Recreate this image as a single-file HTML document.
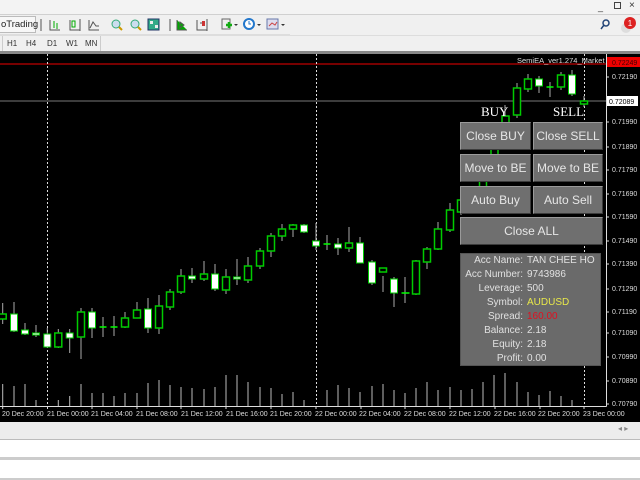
<!DOCTYPE html>
<html><head><meta charset="utf-8"><style>
*{margin:0;padding:0;box-sizing:border-box}
body{width:640px;height:480px;overflow:hidden;background:#f0f0f0;font-family:"Liberation Sans",sans-serif;position:relative}
.abs{position:absolute}
.btn{position:absolute;background:#6f6f6f;border-top:1px solid #9a9a9a;border-left:1px solid #9a9a9a;border-right:1px solid #3c3c3c;border-bottom:1px solid #3c3c3c;color:#e6e6e6;font-size:12px;text-align:center;line-height:26px;white-space:nowrap;overflow:hidden}
.info{position:absolute;left:460px;top:253px;width:141px;height:113px;background:#6a6a6a;border:1px solid #555}
.row{position:absolute;left:0;width:141px;font-size:10px;color:#e0e0e0;height:14px;line-height:14px}
.row .l{position:absolute;right:79px;text-align:right;white-space:nowrap}
.row .v{position:absolute;left:66px;white-space:nowrap}
.tf{position:absolute;top:39px;font-size:8px;color:#333}
</style></head><body>
<div class="abs" style="left:0;top:0;width:640px;height:15px;background:#f3f3f3"></div>
<div class="abs" style="left:598px;top:2px;font-size:9px;color:#333">_</div>
<div class="abs" style="left:614px;top:2px;width:7px;height:7px;border:1px solid #444"></div>
<div class="abs" style="left:629px;top:0px;font-size:10px;color:#333">×</div>
<div class="abs" style="left:0;top:14px;width:640px;height:1px;background:#d0d0d0"></div>
<div class="abs" style="left:0;top:15px;width:290px;height:20px;background:#f0f0f0;border-bottom:1px solid #ddd"></div>
<div class="abs" style="left:-1px;top:16px;width:37px;height:17px;border:1px solid #bbb;background:#f7f7f7;font-size:9.5px;line-height:15px;padding-left:1px;color:#222">oTrading</div>
<svg class="abs" style="left:40px;top:15px" width="260" height="20">
<g stroke="#555" fill="none" stroke-width="1">
<line x1="1" y1="4" x2="1" y2="16"/><line x1="40" y1="4" x2="40" y2="16"/><line x1="130" y1="4" x2="130" y2="16"/><line x1="167" y1="4" x2="167" y2="16"/>
<path d="M10 5v10h10"/><path d="M14 6v7M17 8v6" stroke="#0a0"/>
<path d="M30 5v10h10"/><rect x="32" y="6" width="3" height="6" stroke="#0a0"/>
<path d="M49 5v10h10M50 13l3-6 3 4 3 0"/>
</g>
<circle cx="76" cy="9" r="4" fill="#cde" stroke="#3a7"/><line x1="79" y1="12" x2="82" y2="15" stroke="#c90" stroke-width="2"/>
<circle cx="95" cy="9" r="4" fill="#cde" stroke="#3a7"/><line x1="98" y1="12" x2="101" y2="15" stroke="#c90" stroke-width="2"/>
<rect x="108" y="4" width="11" height="11" fill="#3a8" stroke="#236"/><rect x="110" y="6" width="3" height="3" fill="#eee"/><rect x="115" y="10" width="3" height="3" fill="#eee"/>
<path d="M137 5v10h10M140 7v6l4-3z" stroke="#555" fill="#0a0"/>
<path d="M157 5v10h10M160 8h4" stroke="#555" fill="none"/><rect x="162" y="6" width="3" height="5" fill="#c33"/>
<rect x="182" y="4" width="8" height="10" fill="#eee" stroke="#666"/><path d="M186 10h6M189 7v6" stroke="#1a1" stroke-width="2.5"/><path d="M194 9l2 2 2-2z" fill="#333"/>
<circle cx="209" cy="9" r="5" fill="#fff" stroke="#27c" stroke-width="2"/><path d="M209 6v3h2" stroke="#27c" fill="none"/><path d="M217 9l2 2 2-2z" fill="#333"/>
<rect x="227" y="4" width="11" height="10" fill="#dde" stroke="#67a"/><path d="M229 11l3-3 3 2 2-3" stroke="#c44" fill="none"/><path d="M241 9l2 2 2-2z" fill="#333"/>
</svg>
<svg class="abs" style="left:600px;top:17px" width="40" height="18"><circle cx="6" cy="6" r="3" fill="none" stroke="#247" stroke-width="1.5"/><line x1="4" y1="8" x2="1" y2="12" stroke="#247" stroke-width="1.5"/><circle cx="26" cy="11" r="5" fill="#ddd"/><circle cx="30" cy="6" r="6" fill="#d22"/><text x="30" y="9" font-size="8" fill="#fff" text-anchor="middle" font-family="Liberation Sans">1</text></svg>
<div class="abs" style="left:0;top:35px;width:640px;height:1px;background:#ddd"></div>
<div class="abs" style="left:2px;top:36px;width:99px;height:15px;border-right:1px solid #ccc;border-left:1px solid #ccc"></div>
<span class="tf" style="left:7px">H1</span><span class="tf" style="left:26px">H4</span><span class="tf" style="left:47px">D1</span><span class="tf" style="left:66px">W1</span><span class="tf" style="left:85px">MN</span>
<div class="abs" style="left:0;top:51px;width:640px;height:3px;background:#888"></div>
<svg class="abs" style="left:0;top:54px" width="640" height="368" viewBox="0 54 640 368" font-family="Liberation Sans" font-size="7">
<rect x="0" y="54" width="640" height="368" fill="#000"/>
<line x1="0" y1="64" x2="606" y2="64" stroke="#700" stroke-width="2"/>
<line x1="0" y1="101" x2="606" y2="101" stroke="#777" stroke-width="1"/>
<g stroke="#ddd" stroke-dasharray="2,2"><line x1="47.5" y1="54" x2="47.5" y2="406"/><line x1="316.5" y1="54" x2="316.5" y2="406"/><line x1="584.5" y1="54" x2="584.5" y2="406"/></g>
<g stroke="#bbb" stroke-width="1">
<path d="M2.7 406V384M14 406V386M25 406V384M36 406V400M58.3 406V400M69.7 406V396M81 406V384M92 406V393M103 406V393M114 406V396M125 406V393M137 406V393M148 406V383M159 406V380M170 406V385M181 406V387M192 406V388M204 406V389M215 406V387M226 406V375M237 406V375M248 406V382M260 406V387M271 406V388M282 406V394M293 406V392M304 406V400M327 406V390M338 406V385M349 406V388M360 406V392M372 406V386M383 406V384M394 406V390M405 406V393M416 406V388M427 406V382M438 406V390M450 406V387M461 406V390M472 406V389M483 406V382M494 406V375M505 406V373M517 406V382M528 406V392M539 406V395M550 406V391M561 406V396M572 406V400"/>
</g>
<g stroke="#aaa" stroke-width="1">
<path d="M2.7 303V324M14 302V332M25 323V335M36 325V337M47.3 328V348M58.3 329V348M69.7 329V353M81 308V359M92 308V338M103 317V337M114 316V336M125 312V328M137 302V318M148 298V333M159 295V334M170 289V310M181 269V294M192 268V283M204 261V281M215 264V291M226 269V294M237 259V285M248 257V283M260 248V269M271 233V257M282 224V241M293 224V237M304 224V233M316 223V250M327 235V250M338 238V255M349 227V252M360 237V263M372 260V285M383 276V292M394 277V307M405 277V303M416 260V295M427 247V269M438 222V250M450 203V232M461 195V215M505 105V125M517 83V118M528 74V92M539 76V93M550 82V97M561 72V90M572 70V96M584 96V107"/>
</g>
<g fill="#000" stroke="#0c0" stroke-width="1.5">
<rect x="-0.8" y="314" width="7" height="5"/><rect x="54.8" y="333" width="7" height="14"/><rect x="77.5" y="312" width="7" height="25"/>
<rect x="121.5" y="318" width="7" height="9"/><rect x="133.5" y="310" width="7" height="8"/><rect x="155.5" y="306" width="7" height="22"/>
<rect x="166.5" y="292" width="7" height="15"/><rect x="177.5" y="276" width="7" height="16"/><rect x="200.5" y="274" width="7" height="5"/>
<rect x="222.5" y="277" width="7" height="13"/><rect x="244.5" y="266" width="7" height="14"/><rect x="256.5" y="251" width="7" height="15"/>
<rect x="267.5" y="236" width="7" height="15"/><rect x="278.5" y="229" width="7" height="7"/><rect x="289.5" y="225" width="7" height="4"/>
<rect x="345.5" y="243" width="7" height="5"/><rect x="379.5" y="268" width="7" height="4"/><rect x="412.5" y="261" width="7" height="33"/>
<rect x="423.5" y="249" width="7" height="13"/><rect x="434.5" y="229" width="7" height="20"/><rect x="446.5" y="210" width="7" height="20"/>
<rect x="457.5" y="200" width="7" height="12"/><rect x="468.5" y="190" width="7" height="18"/><rect x="479.5" y="175" width="7" height="25"/>
<rect x="491" y="140" width="7" height="40"/><rect x="502" y="116" width="7" height="24"/><rect x="513.5" y="88" width="7" height="27"/>
<rect x="524.5" y="79" width="7" height="10"/><rect x="557.5" y="75" width="7" height="12"/><rect x="580.5" y="101" width="7" height="3"/>
</g>
<g fill="#fff" stroke="#0c0" stroke-width="1">
<rect x="10.5" y="314" width="7" height="17"/><rect x="21.5" y="330" width="7" height="4"/><rect x="32.5" y="333" width="7" height="2"/>
<rect x="43.8" y="334" width="7" height="13"/><rect x="66.2" y="333" width="7" height="5"/><rect x="88.5" y="312" width="7" height="16"/>
<rect x="144.5" y="309" width="7" height="19"/><rect x="188.5" y="276" width="7" height="3"/><rect x="211.5" y="274" width="7" height="15"/>
<rect x="233.5" y="277" width="7" height="2"/><rect x="300.5" y="225" width="7" height="7"/><rect x="312.5" y="241" width="7" height="5"/>
<rect x="334.5" y="244" width="7" height="4"/><rect x="356.5" y="243" width="7" height="20"/><rect x="368.5" y="262" width="7" height="21"/>
<rect x="390.5" y="279" width="7" height="14"/><rect x="535.5" y="79" width="7" height="7"/><rect x="568.5" y="75" width="7" height="19"/>
</g>
<g stroke="#0f0" stroke-width="1.5"><path d="M99.5 327h7M110.5 327h7M323.5 244h7M401.5 293h8M546.5 87h7"/></g>
<line x1="0" y1="406.5" x2="606.5" y2="406.5" stroke="#ddd"/>
<line x1="606.5" y1="54" x2="606.5" y2="406.5" stroke="#ddd"/>
<g stroke="#ddd"><path d="M2.7 406v3M47.5 406v3M92 406v3M137 406v3M181 406v3M226 406v3M271 406v3M316 406v3M361 406v3M405 406v3M450 406v3M495 406v3M540 406v3M584 406v3"/>
<path d="M606 77h3M606 122h3M606 147h3M606 170h3M606 194h3M606 217h3M606 241h3M606 264h3M606 289h3M606 312h3M606 333h3M606 357h3M606 381h3M606 404h3"/></g>
<g fill="#ddd">
<text x="612" y="79">0.72190</text><text x="612" y="124">0.71990</text><text x="612" y="149">0.71890</text><text x="612" y="172">0.71790</text><text x="612" y="196">0.71690</text><text x="612" y="219">0.71590</text><text x="612" y="243">0.71490</text><text x="612" y="266">0.71390</text><text x="612" y="291">0.71290</text><text x="612" y="314">0.71190</text><text x="612" y="335">0.71090</text><text x="612" y="359">0.70990</text><text x="612" y="383">0.70890</text><text x="612" y="406">0.70790</text>
<text x="2" y="416">20 Dec 20:00</text><text x="47" y="416">21 Dec 00:00</text><text x="91" y="416">21 Dec 04:00</text><text x="136" y="416">21 Dec 08:00</text><text x="181" y="416">21 Dec 12:00</text><text x="226" y="416">21 Dec 16:00</text><text x="270" y="416">21 Dec 20:00</text><text x="315" y="416">22 Dec 00:00</text><text x="359" y="416">22 Dec 04:00</text><text x="404" y="416">22 Dec 08:00</text><text x="449" y="416">22 Dec 12:00</text><text x="494" y="416">22 Dec 16:00</text><text x="538" y="416">22 Dec 20:00</text><text x="583" y="416">23 Dec 00:00</text>
<text x="517" y="63" font-size="7.5">SemiEA_ver1.274_Market☺</text>
</g>
<rect x="607" y="57" width="33" height="10" fill="#e00"/><text x="612" y="65" fill="#400">0.72249</text>
<rect x="607" y="96" width="31" height="10" fill="#fff"/><text x="609" y="104" fill="#000">0.72089</text>
<text x="481" y="116" fill="#fff" font-size="13" font-family="Liberation Serif">BUY</text>
<text x="553" y="116" fill="#fff" font-size="13" font-family="Liberation Serif">SELL</text>
</svg>
<div class="btn" style="left:460px;top:122px;width:71px;height:28px">Close BUY</div>
<div class="btn" style="left:533px;top:122px;width:70px;height:28px">Close SELL</div>
<div class="btn" style="left:460px;top:154px;width:71px;height:28px">Move to BE</div>
<div class="btn" style="left:533px;top:154px;width:70px;height:28px">Move to BE</div>
<div class="btn" style="left:460px;top:186px;width:71px;height:28px">Auto Buy</div>
<div class="btn" style="left:533px;top:186px;width:70px;height:28px">Auto Sell</div>
<div class="btn" style="left:460px;top:217px;width:143px;height:28px">Close ALL</div>
<div class="info">
<div class="row" style="top:0px"><span class="l">Acc Name:</span><span class="v">TAN CHEE HO</span></div>
<div class="row" style="top:14px"><span class="l">Acc Number:</span><span class="v">9743986</span></div>
<div class="row" style="top:28px"><span class="l">Leverage:</span><span class="v">500</span></div>
<div class="row" style="top:42px"><span class="l">Symbol:</span><span class="v" style="color:#e8e84a">AUDUSD</span></div>
<div class="row" style="top:56px"><span class="l">Spread:</span><span class="v" style="color:#e01020">160.00</span></div>
<div class="row" style="top:70px"><span class="l">Balance:</span><span class="v">2.18</span></div>
<div class="row" style="top:84px"><span class="l">Equity:</span><span class="v">2.18</span></div>
<div class="row" style="top:98px"><span class="l">Profit:</span><span class="v">0.00</span></div>
</div>
<div class="abs" style="left:0;top:422px;width:640px;height:17px;background:#ececec"></div>
<div class="abs" style="left:618px;top:424px;font-size:8px;color:#888">◂ ▸</div>
<div class="abs" style="left:0;top:439px;width:640px;height:1px;background:#bbb"></div>
<div class="abs" style="left:0;top:440px;width:640px;height:17px;background:#fff"></div>
<div class="abs" style="left:0;top:457px;width:640px;height:3px;background:#ccc"></div>
<div class="abs" style="left:0;top:460px;width:640px;height:18px;background:#fff"></div>
<div class="abs" style="left:0;top:478px;width:640px;height:2px;background:#ccc"></div>
</body></html>
